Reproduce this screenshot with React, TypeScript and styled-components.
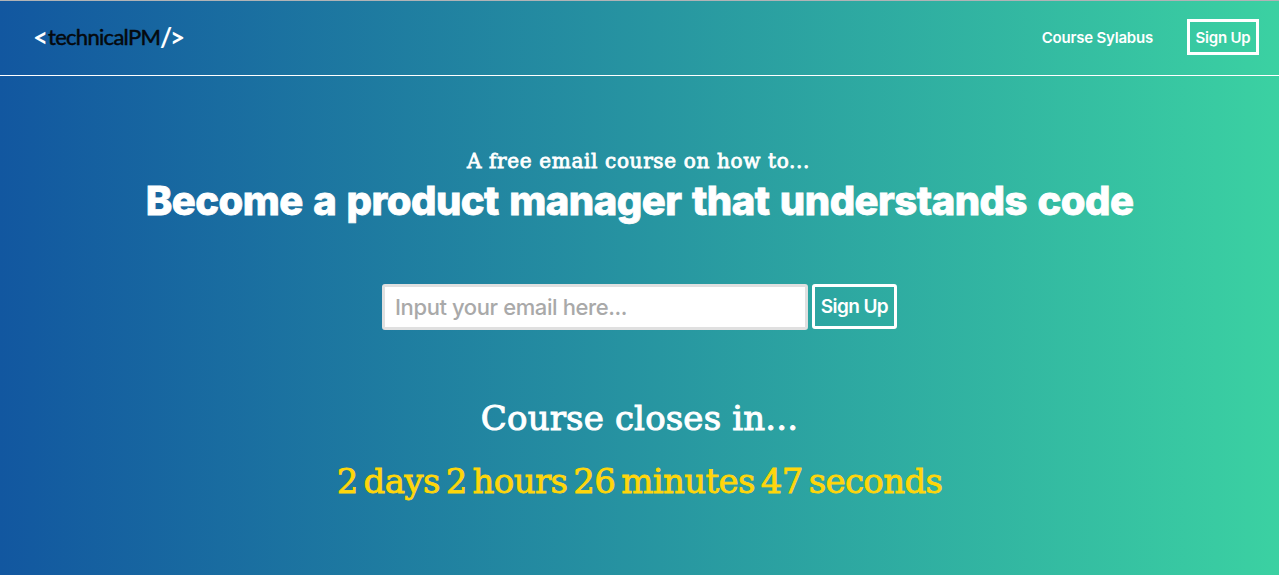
import styled, { createGlobalStyle } from 'styled-components';

const App = () => {
    return (
        <>
            <GlobalStyle />
            <Page>
                <Header>
                    <Logo href="#">
                        <LogoBracket>&lt;</LogoBracket>
                        <LogoName>technicalPM</LogoName>
                        <LogoSlash>/</LogoSlash>
                        <LogoBracket>&gt;</LogoBracket>
                    </Logo>
                    <Nav>
                        <NavLink href="#">Course Sylabus</NavLink>
                        <NavButton href="#">Sign Up</NavButton>
                    </Nav>
                </Header>
                <Hero>
                    <Lead>A free email course on how to...</Lead>
                    <Title>Become a product manager that understands code</Title>
                    <Form onSubmit={(e) => e.preventDefault()}>
                        <EmailInput type="text" placeholder="Input your email here..." />
                        <SubmitButton type="submit">Sign Up</SubmitButton>
                    </Form>
                    <ClosesIn>Course closes in...</ClosesIn>
                    <Countdown>2 days 2 hours 26 minutes 47 seconds</Countdown>
                </Hero>
            </Page>
        </>
    );
};

export default App;

const sans = `Inter, 'Liberation Sans', sans-serif`;
const serif = `'DejaVu Serif', 'Liberation Serif', serif`;

const GlobalStyle = createGlobalStyle`
    * {
        box-sizing: border-box;
    }

    body {
        margin: 0;
        font-family: ${sans};
    }
`;

const Page = styled.div`
    height: 575px;
    overflow: hidden;
    color: #fff;
    background: linear-gradient(to right, #1257a0, #3bd1a2);
`;

const Header = styled.header`
    display: flex;
    justify-content: space-between;
    height: 76px;
    padding: 0 20px 0 33px;
    border-top: 1px solid #b1b3b6;
    border-bottom: 1px solid #fff;
`;

const Logo = styled.a`
    display: flex;
    align-items: center;
    height: 71px;
    font-family: Lato, sans-serif;
    font-size: 22px;
    text-decoration: none;
`;

const LogoBracket = styled.span`
    width: 15px;
    color: #fff;
    font-size: 26px;
    font-weight: 700;
`;

const LogoName = styled.span`
    width: 112px;
    color: #05090d;
    letter-spacing: -0.7px;
    -webkit-text-stroke: 0.5px #05090d;
`;

const LogoSlash = styled.span`
    width: 10px;
    color: #fff;
    font-size: 26px;
    font-weight: 700;
`;

const Nav = styled.nav`
    display: flex;
    align-items: center;
    height: 72px;
    gap: 34px;
`;

const NavLink = styled.a`
    color: #fff;
    font-size: 15px;
    font-weight: 600;
    letter-spacing: -0.2px;
    text-decoration: none;
    white-space: nowrap;
`;

const NavButton = styled(NavLink)`
    display: flex;
    align-items: center;
    justify-content: center;
    width: 72px;
    height: 36px;
    border: 3px solid #fff;
`;

const Hero = styled.main`
    display: flex;
    flex-direction: column;
    align-items: center;
    padding-top: 70px;
    white-space: nowrap;
`;

const Lead = styled.h3`
    margin: 0 2px 0 0;
    font-family: ${serif};
    font-size: 20px;
    font-weight: 400;
    line-height: 30px;
    letter-spacing: 0.65px;
    -webkit-text-stroke: 0.8px #fff;
`;

const Title = styled.h1`
    margin: 0;
    font-size: 40px;
    font-weight: 800;
    line-height: 50px;
    letter-spacing: -0.53px;
    word-spacing: 2.2px;
    -webkit-text-stroke: 0.8px #fff;
`;

const Form = styled.form`
    display: flex;
    gap: 4px;
    margin-top: 58px;
`;

const EmailInput = styled.input`
    width: 426px;
    height: 46px;
    padding: 0 10px;
    border: 3px solid #e0e0e0;
    border-radius: 3px;
    background: #fff;
    font-family: ${sans};
    font-size: 22px;
    font-weight: 500;
    letter-spacing: -0.4px;

    &::placeholder {
        color: #a9a9a9;
    }
`;

const SubmitButton = styled.button`
    width: 85px;
    height: 45px;
    padding: 0;
    border: 3px solid #fff;
    border-radius: 3px;
    background: transparent;
    color: #fff;
    font-family: ${sans};
    font-size: 19px;
    font-weight: 600;
    letter-spacing: -0.6px;
`;

const ClosesIn = styled.h2`
    margin: 58px 0 0;
    font-family: ${serif};
    font-size: 34px;
    font-weight: 400;
    line-height: 60px;
    letter-spacing: 0.15px;
    -webkit-text-stroke: 1px #fff;
`;

const Countdown = styled.div`
    color: #ffd60a;
    font-family: ${serif};
    font-size: 34px;
    line-height: 66px;
    letter-spacing: -0.65px;
    word-spacing: -4.2px;
    -webkit-text-stroke: 0.8px #ffd60a;
`;
